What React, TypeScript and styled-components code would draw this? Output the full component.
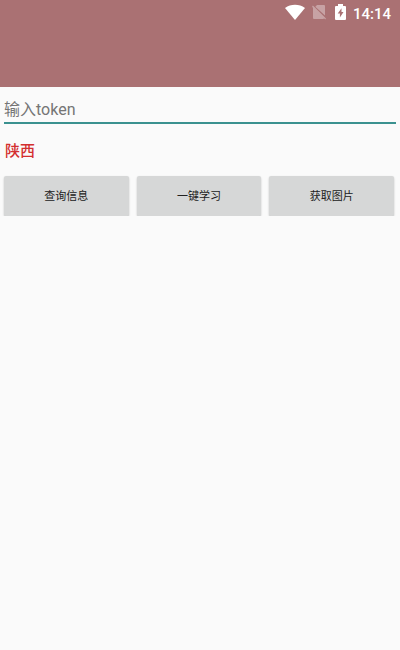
import React from "react";
import styled, { createGlobalStyle } from "styled-components";

const GlobalStyle = createGlobalStyle`
  * { box-sizing: border-box; }
  body {
    margin: 0;
    background: #fafafa;
    font-family: Roboto, "Noto Sans CJK SC", sans-serif;
  }
`;

const Header = styled.header`
  height: 87px;
  background: #aa7173;
`;

const StatusBar = styled.div`
  display: flex;
  align-items: center;
  justify-content: flex-end;
  height: 24px;
  padding-right: 9px;
  color: #fff;
`;

const Icon = styled.svg<{ $gap: number }>`
  flex: none;
  margin-right: ${(p) => p.$gap}px;
  fill: currentColor;
`;

const Clock = styled.time`
  font-size: 15px;
  line-height: 24px;
  font-weight: 500;
  padding-top: 4px;
`;

const Content = styled.main`
  padding: 8px 4px 0;
`;

const TokenInput = styled.input`
  display: block;
  width: 100%;
  height: 29px;
  padding: 2px 0 0;
  border: 0;
  border-bottom: 2px solid #3a918f;
  border-radius: 0;
  outline: none;
  background: transparent;
  color: #212121;
  font: 16px/24px Roboto, "Noto Sans CJK SC", sans-serif;

  &::placeholder {
    color: #757575;
    opacity: 1;
  }
`;

const Region = styled.p`
  margin: 15px 0 13px;
  padding-left: 1px;
  color: #d32f2f;
  font-size: 15px;
  line-height: 24px;
  font-weight: 500;
`;

const Actions = styled.div`
  display: grid;
  grid-template-columns: repeat(3, 1fr);
  gap: 8px;
  padding-right: 2px;
`;

const ActionButton = styled.button`
  height: 40px;
  padding: 2px 0 0;
  border: 0;
  border-radius: 2px;
  background: #d6d7d7;
  box-shadow: 0 1px 2px rgba(0, 0, 0, 0.24);
  color: #212121;
  font: 400 11px/16px Roboto, "Noto Sans CJK SC", sans-serif;
`;

const actions = ["查询信息", "一键学习", "获取图片"];

export default function App() {
  return (
    <>
      <GlobalStyle />
      <Header>
        <StatusBar>
          <Icon $gap={7} width="20" height="16" viewBox="0 0 20 16" aria-hidden="true">
            <path d="M10 16 0 4C3 1.7 6.300 .8 10 .8S17 1.700 20 4Z" />
          </Icon>
          <Icon $gap={9} width="14" height="16" viewBox="0 0 14 16" opacity="0.35" aria-hidden="true">
            <path d="M5 1h7q1 0 1 1v9.600L3.300 2.700ZM.9 1.600 14 14.500l-.8.9-1.200-1.100q-.2.700-1 .7H2q-1 0-1-1V4L.1 2.500Z" />
          </Icon>
          <Icon $gap={7} width="11" height="16" viewBox="0 0 11 16" aria-hidden="true">
            <path
              fillRule="evenodd"
              d="M3 0h5v2h2q1 0 1 1v12q0 1-1 1H1q-1 0-1-1V3q0-1 1-1h2ZM6.500 4.200 2.700 9.400h2.200v4L8.500 8H6.500Z"
            />
          </Icon>
          <Clock>14:14</Clock>
        </StatusBar>
      </Header>
      <Content>
        <TokenInput type="text" placeholder="输入token" aria-label="输入token" />
        <Region>陕西</Region>
        <Actions>
          {actions.map((label) => (
            <ActionButton key={label} type="button">
              {label}
            </ActionButton>
          ))}
        </Actions>
      </Content>
    </>
  );
}
